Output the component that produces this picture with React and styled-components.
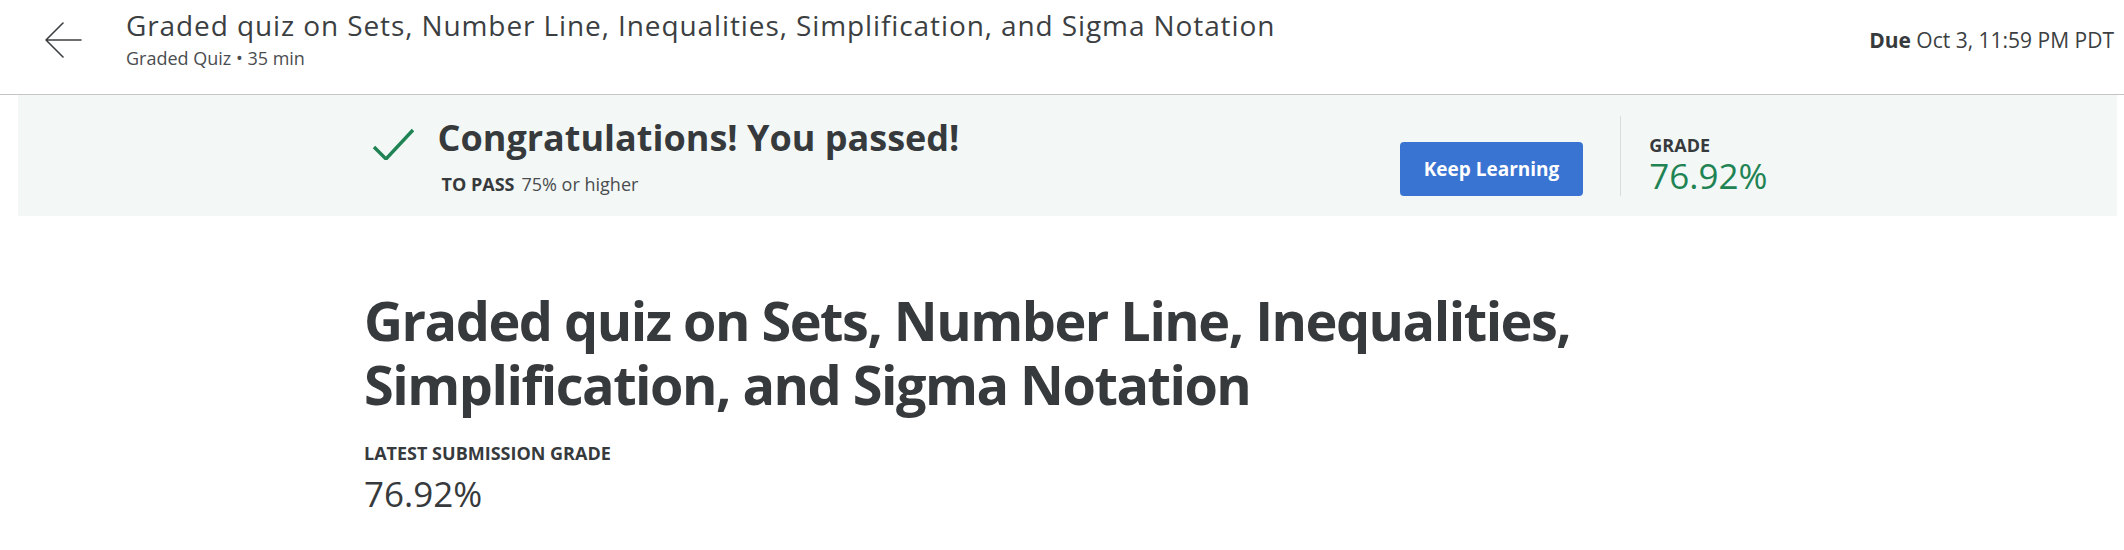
import React from "react";
import styled, { createGlobalStyle } from "styled-components";

const GlobalStyle = createGlobalStyle`
  body {
    margin: 0;
    background: #ffffff;
    font-family: "Open Sans", "DejaVu Sans", sans-serif;
    color: #373a3c;
  }
`;

const Header = styled.header`
  display: flex;
  align-items: flex-start;
  height: 95px;
  padding: 7px 10px 0 44px;
  box-sizing: border-box;
  border-bottom: 1px solid #c4c4c4;
`;

const BackButton = styled.button`
  display: flex;
  margin: 15px 44px 0 0;
  padding: 0;
  border: none;
  background: none;
  color: #3c3f42;
  cursor: pointer;
`;

const HeaderText = styled.div`
  flex: 1;
  min-width: 0;
`;

const HeaderTitle = styled.h1`
  margin: 0;
  font-size: 28px;
  font-weight: 400;
  line-height: 36px;
  letter-spacing: 0.9px;
  color: #3c3f42;
  white-space: nowrap;
`;

const HeaderMeta = styled.div`
  margin-top: 3px;
  font-size: 18px;
  line-height: 24px;
  color: #4a4d50;
`;

const Due = styled.div`
  margin-top: 19px;
  font-size: 21px;
  line-height: 28px;
  color: #3c3f42;
  white-space: nowrap;

  strong {
    font-weight: 700;
    color: #373a3c;
  }
`;

const Banner = styled.section`
  margin: 0 7px 0 18px;
  padding: 21px 0 20px;
  background: #f3f8f6;
`;

const BannerInner = styled.div`
  display: flex;
  justify-content: space-between;
  align-items: stretch;
  width: 1400px;
  margin: 0 auto;
`;

const PassGroup = styled.div`
  display: flex;
  align-items: flex-start;
`;

const CheckIcon = styled.svg`
  flex: none;
  margin: 12px 24px 0 4px;
`;

const PassText = styled.div`
  display: flex;
  flex-direction: column;
`;

const PassHeading = styled.h2`
  margin: 0;
  font-size: 36px;
  font-weight: 700;
  line-height: 44px;
  color: #373a3c;
`;

const PassRule = styled.div`
  margin-top: 12px;
  padding-left: 4px;
  font-size: 18px;
  line-height: 24px;
  color: #4a4d50;
`;

const RuleLabel = styled.span`
  margin-right: 7px;
  font-weight: 700;
  color: #373a3c;
`;

const ActionGroup = styled.div`
  display: flex;
  align-items: flex-end;
`;

const PrimaryButton = styled.button`
  height: 54px;
  padding: 0 24px;
  border: none;
  border-radius: 4px;
  background: #3a74d2;
  color: #ffffff;
  font-family: inherit;
  font-size: 19px;
  font-weight: 700;
  cursor: pointer;
`;

const Divider = styled.div`
  align-self: stretch;
  width: 1px;
  margin: 0 28px 0 37px;
  background: #d9dedc;
`;

const Stat = styled.div`
  display: flex;
  flex-direction: column;
`;

const StatLabel = styled.div`
  font-size: 18px;
  font-weight: 700;
  line-height: 22px;
  text-transform: uppercase;
  color: #373a3c;
`;

const StatValue = styled.div`
  font-size: 35px;
  line-height: ${(p) => p.$lh || "40px"};
  margin-top: ${(p) => p.$gap || "0"};
  color: ${(p) => (p.$pass ? "#1f8354" : "#373a3c")};
`;

const Main = styled.main`
  width: 1400px;
  margin: 0 auto;
  padding: 72px 0 0 2px;
  box-sizing: border-box;
`;

const PageTitle = styled.h1`
  margin: 0;
  font-size: 54px;
  font-weight: 700;
  line-height: 64px;
  letter-spacing: -1.5px;
  color: #373a3c;
`;

const Section = styled.div`
  margin-top: 25px;
`;

const SectionLabel = styled.div`
  font-size: 18px;
  font-weight: 700;
  line-height: 24px;
  color: #373a3c;
`;

function ArrowLeft() {
  return (
    <svg width="38" height="36" viewBox="0 0 38 36" fill="none">
      <path
        d="M19 1 L2 18 L19 35 M2 18 H37"
        stroke="currentColor"
        strokeWidth="1.6"
        strokeLinecap="round"
        strokeLinejoin="round"
      />
    </svg>
  );
}

export default function App() {
  return (
    <>
      <GlobalStyle />
      <Header>
        <BackButton aria-label="Back">
          <ArrowLeft />
        </BackButton>
        <HeaderText>
          <HeaderTitle>
            Graded quiz on Sets, Number Line, Inequalities, Simplification, and Sigma Notation
          </HeaderTitle>
          <HeaderMeta>Graded Quiz • 35 min</HeaderMeta>
        </HeaderText>
        <Due>
          <strong>Due</strong> Oct 3, 11:59 PM PDT
        </Due>
      </Header>

      <Banner>
        <BannerInner>
          <PassGroup>
            <CheckIcon width="42" height="32" viewBox="0 0 42 32" fill="none">
              <path d="M2 19 L14 31 L41 2" stroke="#1f8354" strokeWidth="3.4" />
            </CheckIcon>
            <PassText>
              <PassHeading>Congratulations! You passed!</PassHeading>
              <PassRule>
                <RuleLabel>TO PASS</RuleLabel>75% or higher
              </PassRule>
            </PassText>
          </PassGroup>
          <ActionGroup>
            <PrimaryButton>Keep Learning</PrimaryButton>
            <Divider />
            <Stat>
              <StatLabel>Grade</StatLabel>
              <StatValue $pass>76.92%</StatValue>
            </Stat>
          </ActionGroup>
        </BannerInner>
      </Banner>

      <Main>
        <PageTitle>
          Graded quiz on Sets, Number Line, Inequalities, Simplification, and Sigma Notation
        </PageTitle>
        <Section>
          <SectionLabel>LATEST SUBMISSION GRADE</SectionLabel>
          <StatValue $lh="44px" $gap="7px">
            76.92%
          </StatValue>
        </Section>
      </Main>
    </>
  );
}
